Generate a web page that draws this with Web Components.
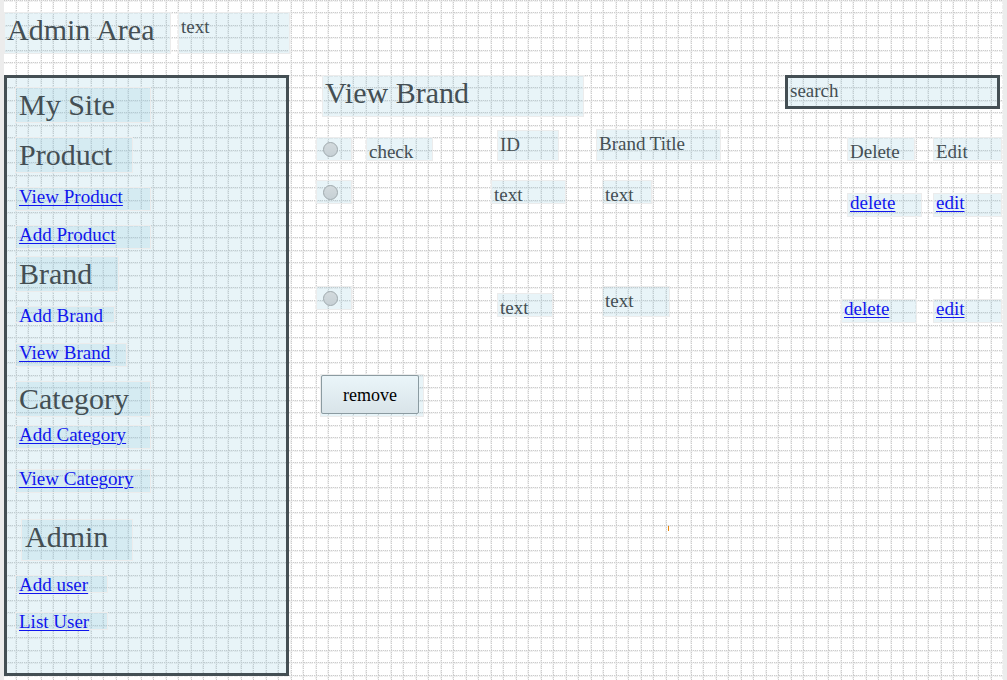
<!DOCTYPE html>
<html lang="en">
<head>
<meta charset="utf-8">
<title>Admin Area - View Brand</title>
<style>
  html, body { margin: 0; }
  body {
    background: #ececec;
    color: #444f54;
    font-family: "Liberation Serif", "Times New Roman", serif;
    font-size: 19px;
    line-height: 20px;
  }
</style>
</head>
<body>
<admin-page></admin-page>

<script>
  const define = (name, html) => customElements.define(name, class extends HTMLElement {
    constructor() {
      super();
      this.attachShadow({ mode: "open" }).innerHTML = html;
    }
  });

  /* A translucent block of the mockup; --w and --h give its size. */
  define("wire-chip", `
    <style>
      :host {
        display: block; box-sizing: border-box;
        width: var(--w, 136px); height: var(--h, 24px); max-width: 100%;
        padding: 0 var(--pad, 2px); border: 1px solid #ececec;
        background: rgba(140, 200, 220, .2) padding-box;
        white-space: nowrap;
      }
      :host([low]) { padding-top: 4px; }
      :host([large]) { font-size: 30px; line-height: 34px; }
      ::slotted(h1), ::slotted(h2) { margin: 0; font: inherit; }
      ::slotted(a) { display: block; width: max-content; line-height: 18px; color: #1016ee; text-decoration-thickness: 1px; text-underline-offset: 2px; }
      ::slotted(a.plain) { text-decoration: none; }
    </style>
    <slot></slot>`);

  /* The framed navigation column. */
  define("side-nav", `
    <style>
      :host { display: block; box-sizing: border-box; border: 3px solid #444f54;
              background: rgba(140, 200, 220, .2); padding: 9px 8px; }
      nav, section { display: flex; flex-direction: column; gap: 14px; }
      wire-chip { --pad: 3px; }
      .brand { margin-top: -7px; }
      .brand wire-chip:last-child { margin-top: 6px; }
      .category { gap: 20px; }
      .category wire-chip:nth-child(2) { margin-top: -12px; }
      .admin { margin-top: 12px; }
      .admin wire-chip:last-child { margin-top: 5px; }
      .indent { margin-left: 6px; }
    </style>
    <nav aria-label="Admin">
      <wire-chip large style="--h:36px"><h2>My Site</h2></wire-chip>
      <section>
        <wire-chip large style="--w:118px;--h:36px"><h2>Product</h2></wire-chip>
        <wire-chip><a href="#view-product">View Product</a></wire-chip>
        <wire-chip><a href="#add-product">Add Product</a></wire-chip>
      </section>
      <section class="brand">
        <wire-chip large style="--w:104px;--h:36px"><h2>Brand</h2></wire-chip>
        <wire-chip style="--w:100px;--h:17px"><a class="plain" href="#add-brand">Add Brand</a></wire-chip>
        <wire-chip style="--w:112px"><a href="#view-brand">View Brand</a></wire-chip>
      </section>
      <section class="category">
        <wire-chip large style="--h:36px"><h2>Category</h2></wire-chip>
        <wire-chip><a href="#add-category">Add Category</a></wire-chip>
        <wire-chip><a href="#view-category">View Category</a></wire-chip>
      </section>
      <section class="admin">
        <wire-chip large class="indent" style="--w:112px;--h:42px"><h2>Admin</h2></wire-chip>
        <wire-chip style="--w:93px;--h:18px"><a href="#add-user">Add user</a></wire-chip>
        <wire-chip style="--w:93px;--h:18px"><a href="#list-user">List User</a></wire-chip>
      </section>
    </nav>`);

  define("search-box", `
    <style>
      :host { display: block; width: 215px; }
      input {
        display: block; box-sizing: border-box; width: 100%; height: 34px; margin: 0;
        padding: 0 2px 2px; border: 3px solid #444f54; border-radius: 0;
        background: rgba(140, 200, 220, .2); color: inherit; font: inherit;
      }
    </style>
    <input type="text" aria-label="Search brands" value="search">`);

  define("brand-table", `
    <style>
      :host { display: block; }
      table { width: 100%; table-layout: fixed; border-collapse: collapse; }
      th, td { padding: 0; font-weight: normal; text-align: left; vertical-align: bottom; }
      .top { vertical-align: top; }
      .inset { padding-left: 6px; }
      thead th { height: 32px; padding-bottom: 19px; }
      tbody td { height: 37px; }
      tbody tr:first-child td { padding-bottom: 69px; }
      tbody .raised { padding-bottom: 6px; height: 31px; }
      col.radio { width: 50px; } col.check { width: 125px; } col.id { width: 105px; }
      col.delete { width: 92px; } col.edit { width: 70px; }
      .dot { --w: 36px; }
      input {
        appearance: none; display: block; box-sizing: border-box;
        width: 15px; height: 15px; margin: 0 4px; border: 1px solid #a0aaae;
        border-radius: 50%; background: linear-gradient(#d3dadd, #c6d0d5);
      }
      input:checked { box-shadow: inset 0 0 0 3px #444f54; }
    </style>
    <table>
      <colgroup><col class="radio"><col class="check"><col class="id"><col><col class="delete"><col class="edit"></colgroup>
      <thead>
        <tr>
          <th><wire-chip low class="dot"><input type="radio" name="pick" id="all"></wire-chip></th>
          <th><wire-chip low style="--w:67px"><label for="all">check</label></wire-chip></th>
          <th class="inset"><wire-chip low style="--w:62px;--h:31px">ID</wire-chip></th>
          <th><wire-chip low style="--w:125px;--h:32px">Brand Title</wire-chip></th>
          <th class="inset"><wire-chip low style="--w:68px">Delete</wire-chip></th>
          <th><wire-chip low style="--w:69px">Edit</wire-chip></th>
        </tr>
      </thead>
      <tbody>
        <tr>
          <td class="top"><wire-chip low class="dot"><input type="radio" name="pick" aria-label="Select first brand"></wire-chip></td>
          <td></td>
          <td class="top"><wire-chip low style="--w:75px">text</wire-chip></td>
          <td class="top inset"><wire-chip low style="--w:50px">text</wire-chip></td>
          <td class="inset"><wire-chip style="--w:75px"><a href="#delete-1">delete</a></wire-chip></td>
          <td><wire-chip style="--w:69px"><a href="#edit-1">edit</a></wire-chip></td>
        </tr>
        <tr>
          <td class="top"><wire-chip low class="dot"><input type="radio" name="pick" aria-label="Select second brand"></wire-chip></td>
          <td></td>
          <td class="inset raised"><wire-chip low style="--w:56px">text</wire-chip></td>
          <td class="top inset"><wire-chip low style="--w:68px;--h:31px">text</wire-chip></td>
          <td><wire-chip style="--w:76px"><a href="#delete-2">delete</a></wire-chip></td>
          <td><wire-chip style="--w:69px"><a href="#edit-2">edit</a></wire-chip></td>
        </tr>
      </tbody>
    </table>`);

  define("wire-button", `
    <style>
      :host { display: block; box-sizing: border-box; width: 104px; padding: 0 4px 2px 0;
              border: 1px solid #ececec; background: rgba(140, 200, 220, .2); }
      button {
        display: block; box-sizing: border-box; width: 100%; height: 39px; padding: 0;
        border: 1px solid #8b9ba1; border-radius: 2px; color: #000; font: inherit; font-size: 18px;
        background: linear-gradient(#eaf5f9, #d9e4e9);
      }
    </style>
    <button type="button"><slot></slot></button>`);

  /* The sheet of squared paper that holds every part. */
  define("admin-page", `
    <style>
      :host {
        box-sizing: border-box; min-height: 100vh; margin: 0 4px; padding: 12px 0 4px;
        background: #fff url('data:image/svg+xml,<svg xmlns="http://www.w3.org/2000/svg" width="25" height="25"><g fill="none" stroke="%23efefef" stroke-width="2" stroke-dasharray="4 1"><path d="M12 0V25M24 0V25M0 1H25M0 13H25"/></g><g fill="none" stroke="%23cdcdcd" stroke-dasharray="1 1"><path d="M12.5 0V25M24.5 0V25M0 .5H25M0 12.5H25"/></g></svg>');
        display: flex; flex-direction: column; gap: 21px;
      }
      header { display: flex; gap: 7px; }
      .body { flex: 1; display: grid; grid-template-columns: 285px minmax(0, 1fr); column-gap: 27px; }
      .bar { display: flex; justify-content: space-between; padding: 0 3px 0 6px; margin-bottom: 12px; }
      brand-table { margin-bottom: 51px; }
      wire-button { margin-left: 4px; }
      .tick { width: 1px; height: 5px; margin: 109px auto 0 352px; background: #e8870c; }
    </style>
    <header>
      <wire-chip large style="--w:167px;--h:42px"><h1>Admin Area</h1></wire-chip>
      <wire-chip low style="--w:112px;--h:42px">text</wire-chip>
    </header>
    <div class="body">
      <side-nav></side-nav>
      <main>
        <div class="bar">
          <wire-chip large style="--w:262px;--h:42px"><h2>View Brand</h2></wire-chip>
          <search-box></search-box>
        </div>
        <brand-table></brand-table>
        <wire-button>remove</wire-button>
        <div class="tick"></div>
      </main>
    </div>`);
</script>
</body>
</html>
